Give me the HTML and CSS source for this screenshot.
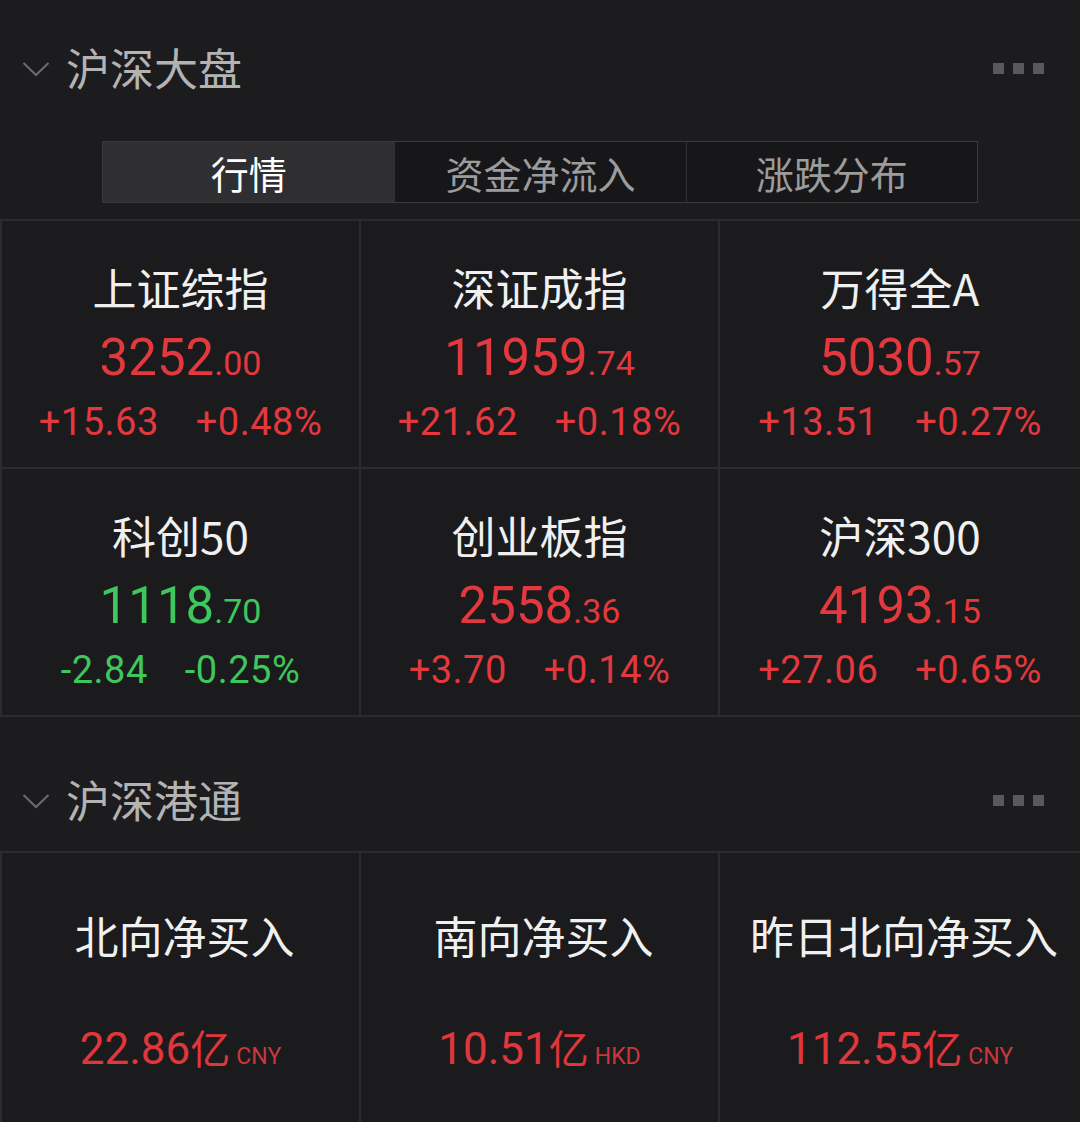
FILE: index.html
```html
<!DOCTYPE html>
<html lang="zh-CN">
<head>
<meta charset="utf-8">
<title>沪深大盘</title>
<link rel="stylesheet" href="styles.css">
</head>
<body>
<div class="page">
  <div class="section-head first">
    <svg class="chev" width="28" height="16" viewBox="0 0 28 16"><polyline points="1.5,2 14,14 26.5,2" fill="none" stroke="#6c6c6e" stroke-width="2"/></svg>
    <div class="title">沪深大盘</div>
    <div class="dots"><i></i><i></i><i></i></div>
  </div>

  <div class="tabs">
    <div class="tab active">行情</div>
    <div class="tab">资金净流入</div>
    <div class="tab">涨跌分布</div>
  </div>

  <div class="grid index-grid">
    <div class="cell">
      <div class="name">上证综指</div>
      <div class="price up">3252<span class="dec">.00</span></div>
      <div class="chg up"><span>+15.63</span><span>+0.48%</span></div>
    </div>
    <div class="cell">
      <div class="name">深证成指</div>
      <div class="price up">11959<span class="dec">.74</span></div>
      <div class="chg up"><span>+21.62</span><span>+0.18%</span></div>
    </div>
    <div class="cell">
      <div class="name">万得全A</div>
      <div class="price up">5030<span class="dec">.57</span></div>
      <div class="chg up"><span>+13.51</span><span>+0.27%</span></div>
    </div>
    <div class="cell">
      <div class="name">科创50</div>
      <div class="price down">1118<span class="dec">.70</span></div>
      <div class="chg down"><span>-2.84</span><span>-0.25%</span></div>
    </div>
    <div class="cell">
      <div class="name">创业板指</div>
      <div class="price up">2558<span class="dec">.36</span></div>
      <div class="chg up"><span>+3.70</span><span>+0.14%</span></div>
    </div>
    <div class="cell">
      <div class="name">沪深300</div>
      <div class="price up">4193<span class="dec">.15</span></div>
      <div class="chg up"><span>+27.06</span><span>+0.65%</span></div>
    </div>
  </div>

  <div class="section-head second">
    <svg class="chev" width="28" height="16" viewBox="0 0 28 16"><polyline points="1.5,2 14,14 26.5,2" fill="none" stroke="#6c6c6e" stroke-width="2"/></svg>
    <div class="title">沪深港通</div>
    <div class="dots"><i></i><i></i><i></i></div>
  </div>

  <div class="grid flow-grid">
    <div class="fcell">
      <div class="fname">北向净买入</div>
      <div class="fval">22.86<span class="yi">亿</span><span class="cur">CNY</span></div>
    </div>
    <div class="fcell">
      <div class="fname">南向净买入</div>
      <div class="fval">10.51<span class="yi">亿</span><span class="cur">HKD</span></div>
    </div>
    <div class="fcell">
      <div class="fname">昨日北向净买入</div>
      <div class="fval">112.55<span class="yi">亿</span><span class="cur">CNY</span></div>
    </div>
  </div>
</div>
</body>
</html>
```

FILE: styles.css
```css
html, body {
  margin: 0;
  padding: 0;
  background: #1c1c1e;
}
body {
  font-family: "Noto Sans CJK SC", "Noto Sans", sans-serif;
  color: #eee;
  width: 1080px;
  height: 1122px;
  overflow: hidden;
}
.page {
  display: flex;
  flex-direction: column;
}
.section-head {
  display: flex;
  align-items: center;
  height: 60px;
  padding: 0 36px 0 22px;
}
.section-head.first { margin-top: 37px; }
.section-head.second { margin-top: 52px; }
.chev { flex: none; margin-right: 16px; margin-top: 4px; }
.title {
  font-size: 44px;
  line-height: 60px;
  color: #b3b3b3;
  flex: 1;
}
.dots {
  display: flex;
  gap: 9px;
  margin-top: 2px;
}
.dots i {
  display: block;
  width: 11px;
  height: 11px;
  background: #59595b;
}
.tabs {
  margin: 44px auto 0;
  width: 876px;
  height: 62px;
  display: grid;
  grid-template-columns: repeat(3, 1fr);
  border: 1px solid #3a3a3c;
  box-sizing: border-box;
  background: #171719;
}
.tab {
  display: flex;
  align-items: center;
  justify-content: center;
  font-size: 38px;
  color: #9c9c9c;
  border-left: 1px solid #333335;
}
.tab:first-child { border-left: none; }
.tab.active {
  background: #2f2f31;
  color: #fff;
}
.grid {
  display: grid;
  grid-template-columns: 357px 357px 1fr;
  gap: 2px;
  background: #2c2c2e;
  padding: 2px 0 0 2px;
}
.index-grid {
  margin-top: 16px;
  grid-template-rows: 246px 246px;
  padding-bottom: 2px;
}
.cell {
  background: #1b1b1d;
  display: flex;
  flex-direction: column;
  align-items: center;
  padding-top: 30px;
}
.name {
  font-size: 44px;
  line-height: 72px;
  color: #f0f0f0;
}
.price {
  font-family: Roboto, "Liberation Sans", sans-serif;
  font-size: 51px;
  line-height: 70px;
  height: 70px;
}
.price .dec { font-size: 34px; }
.chg {
  font-family: Roboto, "Liberation Sans", sans-serif;
  font-size: 38px;
  letter-spacing: 0.5px;
  line-height: 58px;
  display: flex;
  gap: 37px;
}
.up { color: #e3383e; }
.down { color: #3ec75c; }
.flow-grid {
  margin-top: 22px;
  grid-template-rows: 300px;
}
.fcell {
  background: #1b1b1d;
  display: flex;
  flex-direction: column;
  align-items: center;
  padding-top: 50px;
}
.fname {
  font-size: 44px;
  line-height: 64px;
  color: #f0f0f0;
  padding-left: 8px;
}
.fval {
  margin-top: 50px;
  font-family: Roboto, "Liberation Sans", sans-serif;
  font-size: 44px;
  line-height: 60px;
  color: #e0363c;
  display: flex;
  align-items: baseline;
}
.fval .yi {
  font-family: "Noto Sans CJK SC", sans-serif;
  font-size: 40px;
}
.fval .cur {
  font-size: 23px;
  margin-left: 6px;
  color: #c9373d;
}
```
